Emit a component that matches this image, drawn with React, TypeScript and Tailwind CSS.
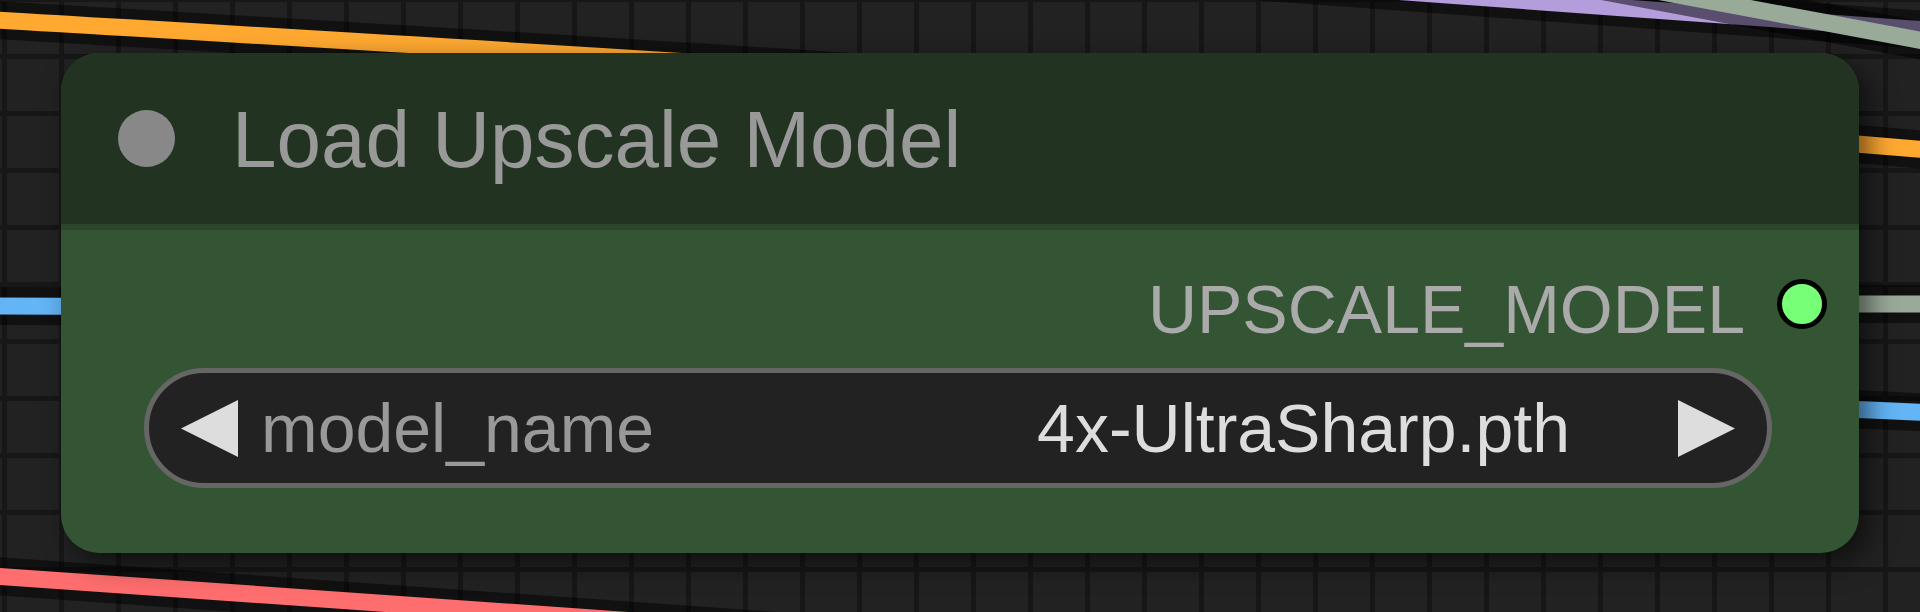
import React from 'react';

type Wire = { d: string; color: string };

// links drawn behind the node, canvas coordinates
const wires: Wire[] = [
  { d: 'M-20 19 C600 56 1280 95 1940 151', color: '#FFA931' },
  { d: 'M-20 306 C700 306 1400 392 1940 413', color: '#64B5F6' },
  { d: 'M-20 575 L820 634', color: '#FF6E6E' },
  { d: 'M1200 -23 L1940 31', color: '#B39DDB' },
  { d: 'M1560 -27 L1940 44', color: '#99AA99' },
  { d: 'M1802 304 L1940 304', color: '#99AA99' },
];

const Links: React.FC = () => (
  <svg className="absolute inset-0" width="1920" height="612" viewBox="0 0 1920 612">
    {wires.map((w, i) => (
      <g key={i} fill="none" strokeLinecap="butt">
        <path d={w.d} stroke="rgba(0,0,0,0.5)" strokeWidth={38} />
        <path d={w.d} stroke={w.color} strokeWidth={17} />
      </g>
    ))}
  </svg>
);

const Arrow: React.FC<{ dir: 'left' | 'right' }> = ({ dir }) => (
  <svg width="57" height="57" viewBox="0 0 57 57" className="shrink-0">
    {dir === 'left' ? (
      <polygon points="57,0 0,28.5 57,57" fill="#DDDDDD" />
    ) : (
      <polygon points="0,0 57,28.5 0,57" fill="#DDDDDD" />
    )}
  </svg>
);

const App: React.FC = () => {
  return (
    <div className="relative w-[1920px] h-[612px] overflow-hidden bg-[#222222] bg-[linear-gradient(to_right,#171717_5px,transparent_5px),linear-gradient(to_bottom,#171717_5px,transparent_5px)] bg-[size:57px_57px] bg-[position:2px_-3px] font-['Liberation_Sans',Arial,sans-serif]">
      <Links />

      {/* Load Upscale Model node */}
      <div className="absolute left-[61px] top-[53px] w-[1798px] h-[500px] rounded-[38px] overflow-hidden bg-[#335533] shadow-[10px_10px_28px_rgba(0,0,0,0.55)] flex flex-col">
        <div className="h-[171px] shrink-0 bg-[#223322] flex items-center">
          <div className="ml-[57px] w-[57px] h-[57px] rounded-full bg-[#888888] shrink-0" />
          <span className="ml-[57px] mt-[3px] text-[80px] leading-none text-[#999999] whitespace-nowrap">
            Load Upscale Model
          </span>
        </div>
        <div className="h-[6px] shrink-0 bg-[#2c452c]" />

        <div className="flex flex-col">
          <div className="mt-[17px] h-[114px] flex items-center justify-end gap-[32px] pr-[32px]">
            <span className="mt-[10px] text-[68px] leading-none text-[#AAAAAA] whitespace-nowrap">UPSCALE_MODEL</span>
            <div className="w-[50px] h-[50px] rounded-full bg-[#77FF77] border-[5px] border-black shrink-0" />
          </div>

          <div className="mt-[7px] ml-[83px] mr-[87px] h-[120px] rounded-full border-[5px] border-[#666666] bg-[#222222] flex items-center pl-[32px] pr-[32px]">
            <Arrow dir="left" />
            <span className="ml-[23px] flex-1 text-[68px] leading-none text-[#999999] whitespace-nowrap">model_name</span>
            <span className="text-[68px] leading-none text-[#DDDDDD] whitespace-nowrap">4x-UltraSharp.pth</span>
            <div className="ml-[108px]">
              <Arrow dir="right" />
            </div>
          </div>
        </div>
      </div>
    </div>
  );
};

export default App;
